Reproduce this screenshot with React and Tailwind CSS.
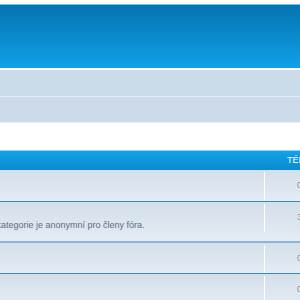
import React from "react";

const rows = [
  { h: "h-[32px]", desc: "", num: "0", border: "border-b border-[#3b88bb]" },
  { h: "h-[41px]", desc: "Tato kategorie je anonymní pro členy fóra.", num: "3", border: "border-b-2 border-[#8ab6d4]" },
  { h: "h-[31px]", desc: "", num: "0", border: "border-b border-[#3b88bb]" },
  { h: "h-[30px]", desc: "", num: "0", border: "" },
];

function ForumRow({ row }) {
  return (
    <div className={`flex ${row.h} ${row.border} bg-gradient-to-b from-[#d3dfea] to-[#e4ecf4]`}>
      <div className="flex-1 flex items-center overflow-hidden pt-[8px]">
        {row.desc && (
          <span className="-ml-[23px] whitespace-nowrap text-[9px] text-[#5d6b85]">
            {row.desc}
          </span>
        )}
      </div>
      <div className="w-[56px] flex items-start pt-[2px]">
        <div className="h-[28px] border-l border-white w-full flex items-center pl-[32px] text-[9px] text-[#9c8f82]">
          {row.num}
        </div>
      </div>
    </div>
  );
}

export default function App() {
  return (
    <div
      className="w-[300px] h-[300px] overflow-hidden bg-white"
      style={{ fontFamily: '"Liberation Sans", Arial, sans-serif' }}
    >
      <div className="w-[320px]">
        <div className="h-[4px] bg-white" />
        <div className="h-[64px] border-t border-[#6cc6f0] bg-gradient-to-b from-[#0474b1] to-[#12a0e8]" />
        <div className="h-[2px] bg-white" />
        <div className="h-[27px] bg-[#cbdbea] border-b border-[#e2ecf4]" />
        <div className="h-[25px] bg-[#cbdbea]" />
        <div className="h-[28px] bg-white border-t border-[#e8f1f8]" />
        <div className="h-[20px] border-t border-[#8fd2f4] bg-gradient-to-b from-[#12a2e9] to-[#0a8bd0] flex items-center">
          <div className="flex-1" />
          <div className="w-[56px] pl-[23px] text-[9px] text-white uppercase">Témata</div>
        </div>
        {rows.map((row, i) => (
          <ForumRow key={i} row={row} />
        ))}
      </div>
    </div>
  );
}
